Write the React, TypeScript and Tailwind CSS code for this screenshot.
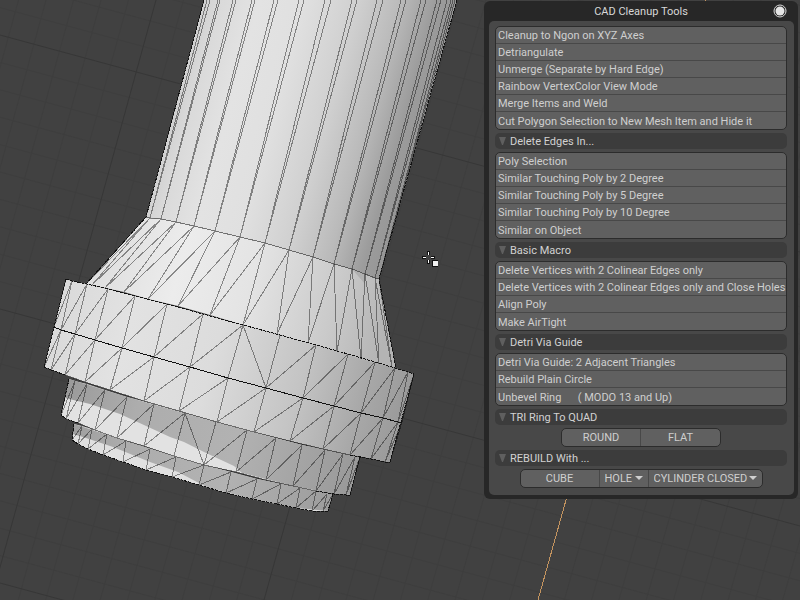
import { ReactNode } from "react";

type Point = [number, number];

const tubeBase: Point[] = [
  [146, 217], [150, 218], [161, 219], [176, 222], [194, 226], [215, 231], [240, 237], [265, 243],
  [289, 250], [313, 257], [334, 264], [352, 269], [365, 274], [375, 278], [379, 279],
];
const tubeTop: number[][] = [
  [204], [207, 210], [218, 220], [233, 236], [252, 255], [274, 278], [299, 304], [325, 331],
  [352, 357], [377, 383], [401, 406], [421, 426], [437, 441], [447, 451], [453, 455],
];
const coneBase: Point[] = [
  [86, 284], [92, 285], [105, 288], [124, 292], [148, 299], [178, 306], [210, 315], [243, 325],
  [277, 334], [308, 343], [337, 351], [361, 359], [379, 364], [392, 367], [396, 368],
];
const collarTop: Point[] = [
  [66, 279], [72, 281], [87, 284], [108, 289], [135, 296], [167, 304], [203, 314], [243, 325],
  [280, 335], [316, 345], [348, 354], [375, 362], [395, 368], [408, 372], [414, 374],
];
const collarMid: Point[] = [
  [54, 327], [61, 330], [75, 334], [95, 340], [122, 348], [154, 357], [190, 367], [228, 378],
  [266, 388], [303, 398], [334, 406], [361, 413], [383, 418], [398, 422], [402, 422],
];
const collarBase: Point[] = [
  [44, 367], [51, 370], [65, 375], [85, 382], [110, 390], [144, 401], [179, 411], [217, 422],
  [254, 432], [290, 441], [323, 449], [350, 455], [371, 459], [385, 462], [390, 462],
];
const ringTop: Point[] = [
  [69, 379], [75, 381], [87, 384], [105, 390], [127, 397], [154, 404], [185, 413], [216, 422],
  [247, 430], [276, 438], [302, 445], [325, 450], [343, 454], [355, 457], [360, 457],
];
const ringBase: Point[] = [
  [61, 415], [66, 419], [78, 423], [95, 430], [117, 438], [144, 446], [174, 456], [204, 465],
  [236, 472], [266, 480], [293, 486], [316, 491], [334, 494], [346, 495], [350, 495],
];
const tipTop: Point[] = [
  [74, 424], [82, 426], [92, 429], [107, 434], [126, 441], [150, 449], [176, 457], [204, 465],
  [231, 472], [257, 479], [281, 484], [300, 488], [316, 491], [327, 494], [333, 494],
];
const tipBase: Point[] = [
  [72, 440], [78, 444], [88, 449], [103, 455], [123, 462], [146, 470], [172, 477], [199, 485],
  [226, 493], [252, 499], [277, 504], [296, 508], [312, 511], [323, 511], [328, 511],
];

const line = (a: Point, b: Point) => `M${a[0]} ${a[1]}L${b[0]} ${b[1]}`;
const chain = (points: Point[]) => "M" + points.map((p) => p.join(" ")).join("L");
const area = (top: Point[], base: Point[]) => chain([...top, ...[...base].reverse()]) + "Z";

/* Edges of a triangulated band; `flipped` is the quad whose diagonal runs the other way. */
const band = (top: Point[], base: Point[], flipped = -1) =>
  top
    .map((p, i) => {
      const rib = line(p, base[i]);
      if (i === 0) return rib;
      return rib + (i === flipped ? line(top[i - 1], base[i]) : line(p, base[i - 1]));
    })
    .join("");

const tubeEdges = tubeTop
  .map((xs, i) => xs.map((x) => line([x, 0], tubeBase[i])).join(""))
  .join("");

const steps = Array.from({ length: 62 }, (_, i) => i - 11);
const gridAcross = (i: number) => `M0 ${35 + i * 27.4}L800 ${252 + i * 27.4}`;
const gridDown = (i: number) => `M${156 + i * 27.5} 0L${-9 + i * 27.3} 600`;
const isMajor = (i: number) => i % 10 === 0;

function Viewport() {
  return (
    <svg
      className="absolute inset-0 h-full w-full"
      viewBox="0 0 800 600"
      preserveAspectRatio="xMinYMin slice"
      fill="none"
      role="img"
      aria-label="3D viewport"
    >
      <defs>
        <linearGradient id="tube" gradientUnits="userSpaceOnUse" x1="204" y1="0" x2="439" y2="65">
          <stop offset="0" stopColor="#d0d0d0" />
          <stop offset="0.07" stopColor="#dadada" />
          <stop offset="0.22" stopColor="#e3e3e3" />
          <stop offset="0.4" stopColor="#e0e0e0" />
          <stop offset="0.62" stopColor="#cfcfcf" />
          <stop offset="0.78" stopColor="#bababa" />
          <stop offset="0.92" stopColor="#9c9c9c" />
          <stop offset="1" stopColor="#969696" />
        </linearGradient>
        <linearGradient id="cone" gradientUnits="userSpaceOnUse" x1="110" y1="250" x2="388" y2="325">
          <stop offset="0" stopColor="#e0e0e0" />
          <stop offset="0.25" stopColor="#ececec" />
          <stop offset="0.5" stopColor="#e4e4e4" />
          <stop offset="0.8" stopColor="#cacaca" />
          <stop offset="1" stopColor="#b4b4b4" />
        </linearGradient>
        <linearGradient id="collar" gradientUnits="userSpaceOnUse" x1="55" y1="323" x2="402" y2="418">
          <stop offset="0" stopColor="#dadada" />
          <stop offset="0.2" stopColor="#e2e2e2" />
          <stop offset="0.45" stopColor="#dcdcdc" />
          <stop offset="0.7" stopColor="#c4c4c4" />
          <stop offset="0.88" stopColor="#a8a8a8" />
          <stop offset="1" stopColor="#9a9a9a" />
        </linearGradient>
        <linearGradient id="shade" gradientUnits="userSpaceOnUse" x1="65" y1="390" x2="352" y2="470">
          <stop offset="0" stopColor="#9a9a9a" />
          <stop offset="0.25" stopColor="#adadad" />
          <stop offset="0.6" stopColor="#b2b2b2" />
          <stop offset="1" stopColor="#9a9a9a" />
        </linearGradient>
      </defs>

      <rect width="800" height="600" fill="#414141" />
      <g stroke="#3e3e3e">
        {steps.filter((i) => !isMajor(i)).map((i) => (
          <path key={i} d={gridAcross(i) + gridDown(i)} />
        ))}
      </g>
      <g stroke="#373737">
        {steps.filter(isMajor).map((i) => (
          <path key={i} d={gridAcross(i) + (i === 20 ? "" : gridDown(i))} />
        ))}
      </g>
      <path d="M706 0L538 600" stroke="#c4945f" shapeRendering="crispEdges" />

      <path d={area(tipTop, tipBase)} fill="#e0e0e0" />
      <path
        d="M74 424L73 434L83 437L113 447L150 462L178 472L197 482L209 488L252 499L296 508L328 511L333 494L257 479L204 465L126 441Z"
        fill="url(#shade)"
      />
      <path d={area(ringTop, ringBase)} fill="#e2e2e2" />
      <path
        d="M69 379L65 398L90 404L120 414L157 431L170 437L184 442L204 452L234 466L242 473L293 486L334 494L350 495L360 457L302 445L216 422L127 397Z"
        fill="url(#shade)"
      />
      <path d={area(collarTop, collarBase)} fill="url(#collar)" />
      <path d={area(tubeBase, coneBase)} fill="url(#cone)" />
      <path d="M352 269L365 274L365 284Z" fill="#b0b0b0" />
      <path d={`M204 0H457L379 279${chain([...tubeBase].reverse()).replace("M", "L")}Z`} fill="url(#tube)" />

      <g stroke="#000000" strokeOpacity="0.42" shapeRendering="crispEdges">
        <path d={tubeEdges} />
        <path d={band(tubeBase, coneBase)} />
        <path d={band(collarTop, collarMid, 8)} />
        <path d={band(collarMid, collarBase)} />
        <path d={band(ringTop, ringBase, 7)} />
        <path d={band(tipTop, tipBase)} />
        <path d={chain(tubeBase)} />
        <path d={chain(ringBase)} />
        <path d={chain(collarBase)} />
      </g>
      <g stroke="#111111" shapeRendering="crispEdges">
        <path d={chain(collarMid)} />
        <g strokeDasharray="3 1">
          <path d={chain(collarTop)} />
          <path d={chain(tipBase)} />
          <path d={chain(collarBase.slice(0, 3)) + chain(collarBase.slice(11))} />
          <path d={chain(ringBase.slice(0, 3)) + chain(ringBase.slice(11))} />
          <path d="M204 0L146 217L86 284M457 0L379 279L396 368" />
          <path d="M66 279L44 367M414 374L390 462M69 379L61 415M360 457L350 495M74 424L72 440M333 494L328 511" />
        </g>
      </g>

      <g shapeRendering="crispEdges">
        <path d="M427 251h3v4h-3zM427 260h3v4h-3zM422 256h4v3h-4zM431 256h4v3h-4z" fill="#111111" />
        <path d="M428 252h1v3h-1zM428 260h1v3h-1zM423 257h3v1h-3zM431 257h3v1h-3z" fill="#ffffff" />
        <path d="M432 260h6v7h-6z" fill="#111111" />
        <path d="M433 261h5v5h-5z" fill="#f2f2f2" />
      </g>
    </svg>
  );
}

function Section({ title, children }: { title: string; children: ReactNode }) {
  return (
    <section className="flex flex-col gap-[3px]">
      <h2 className="flex">
        <button
          type="button"
          aria-expanded="true"
          className="flex h-4 w-full items-center gap-1 rounded-[5px] bg-[#3c3c3c] pl-1 leading-4 text-[#d2d2d2]"
        >
          <svg className="h-2 w-[7px]" viewBox="0 0 7 8" fill="#5f5f5f" aria-hidden="true">
            <path d="M0 0H7L4 8H3Z" />
          </svg>
          <span className="pt-0.5">{title}</span>
        </button>
      </h2>
      {children}
    </section>
  );
}

function CommandList({ commands }: { commands: string[] }) {
  return (
    <ul className="divide-y divide-[#484848] overflow-hidden rounded-[5px] border border-[#2c2c2c] bg-[#606060]">
      {commands.map((command) => (
        <li key={command} className="flex last:pt-px">
          <button
            type="button"
            className="h-4 w-full pt-0.5 pl-0.5 text-left leading-[14px] whitespace-pre text-[#cfcfcf]"
          >
            {command}
          </button>
        </li>
      ))}
    </ul>
  );
}

function ButtonRow({ children }: { children: ReactNode }) {
  return (
    <div className="flex h-[19px] divide-x divide-[#484848] self-center overflow-hidden rounded-[5px] border border-[#2c2c2c] bg-[#606060] text-[#cfcfcf]">
      {children}
    </div>
  );
}

function PushButton({ label }: { label: string }) {
  return (
    <button type="button" className="w-[79px] leading-4">
      {label}
    </button>
  );
}

function Popup({ label, name, width }: { label: string; name: string; width: string }) {
  return (
    <label className={`relative flex ${width}`}>
      <select
        aria-label={name}
        defaultValue={label}
        className="w-full appearance-none bg-transparent pt-px pl-[5px] leading-4 outline-none"
      >
        <option>{label}</option>
      </select>
      <svg
        className="pointer-events-none absolute top-1.5 right-[5px] h-1 w-2"
        viewBox="0 0 8 4"
        fill="#cfcfcf"
        aria-hidden="true"
      >
        <path d="M0 0H8L4 4Z" />
      </svg>
    </label>
  );
}

export default function App() {
  return (
    <main className="relative min-h-screen overflow-hidden bg-[#414141] pt-px pr-0.5 font-[Roboto,sans-serif] text-[11px]">
      <Viewport />
      <aside className="relative ml-auto w-[314px] rounded-md bg-[#272727] px-1 pb-1">
        <header className="flex h-5 items-center pr-[7px] pl-[21px]">
          <h1 className="flex-1 pt-0.5 text-center leading-[18px] text-[#d8d8d8]">CAD Cleanup Tools</h1>
          <button type="button" aria-label="Close" className="h-[14px] w-[14px]">
            <svg viewBox="0 0 14 14" fill="none" aria-hidden="true">
              <circle cx="7" cy="7" r="6" stroke="#d9d9d9" />
              <circle cx="7" cy="7" r="4.5" fill="#e6e6e6" />
            </svg>
          </button>
        </header>
        <div className="ml-px flex flex-col gap-[3px] rounded-[5px] bg-[#484848] px-1.5 pt-[5px] pb-[7px] pr-[7px]">
          <CommandList
            commands={[
              "Cleanup to Ngon on XYZ Axes",
              "Detriangulate",
              "Unmerge (Separate by Hard Edge)",
              "Rainbow VertexColor View Mode",
              "Merge Items and Weld",
              "Cut Polygon Selection to New Mesh Item and Hide it",
            ]}
          />
          <Section title="Delete Edges In...">
            <CommandList
              commands={[
                "Poly Selection",
                "Similar Touching Poly by 2 Degree",
                "Similar Touching Poly by 5 Degree",
                "Similar Touching Poly by 10 Degree",
                "Similar on Object",
              ]}
            />
          </Section>
          <Section title="Basic Macro">
            <CommandList
              commands={[
                "Delete Vertices with 2 Colinear Edges only",
                "Delete Vertices with 2 Colinear Edges only and Close Holes",
                "Align Poly",
                "Make AirTight",
              ]}
            />
          </Section>
          <Section title="Detri Via Guide">
            <CommandList
              commands={[
                "Detri Via Guide: 2 Adjacent Triangles",
                "Rebuild Plain Circle",
                "Unbevel Ring      ( MODO 13 and Up)",
              ]}
            />
          </Section>
          <Section title="TRI Ring To QUAD">
            <ButtonRow>
              <PushButton label="ROUND" />
              <PushButton label="FLAT" />
            </ButtonRow>
          </Section>
          <Section title="REBUILD With ...">
            <ButtonRow>
              <PushButton label="CUBE" />
              <Popup label="HOLE" name="Hole type" width="w-[49px]" />
              <Popup label="CYLINDER CLOSED" name="Cylinder type" width="w-[113px]" />
            </ButtonRow>
          </Section>
        </div>
      </aside>
    </main>
  );
}
